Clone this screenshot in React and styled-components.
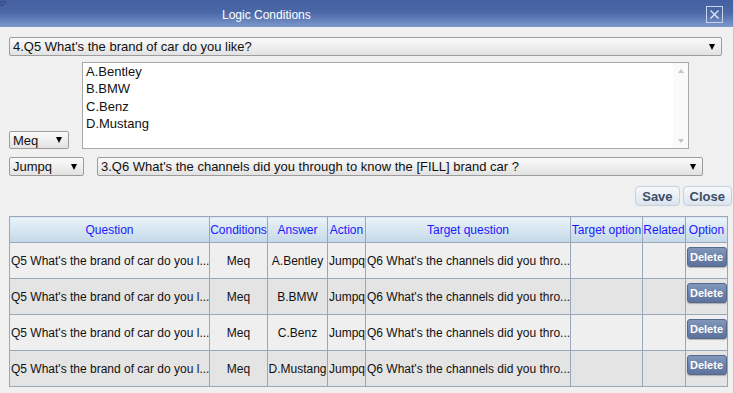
import React from "react";
import styled, { createGlobalStyle } from "styled-components";

const Global = createGlobalStyle`
  html, body { margin: 0; padding: 0; background: #efefef; }
  body { font-family: "Liberation Sans", Arial, sans-serif; }
`;

const Window = styled.div`
  width: 734px;
  height: 393px;
  display: flex;
  flex-direction: column;
  background: #efefef;
  box-sizing: border-box;
  border-right: 1px solid #c8c8c8;
  overflow: hidden;
`;

const TitleBar = styled.div`
  height: 27px;
  flex: none;
  display: flex;
  align-items: center;
  position: relative;
  background: linear-gradient(#4460a0 0%, #4a67a6 45%, #7d98cc 100%);
`;

const Grip = styled.svg`
  position: absolute;
  left: 0;
  top: 0;
`;

const Title = styled.div`
  margin-left: 222px;
  margin-top: 3px;
  color: #ffffff;
  font-size: 12px;
  flex: 1;
`;

const CloseBox = styled.div`
  width: 15px;
  height: 15px;
  margin-right: 10px;
  margin-top: 1px;
  border: 1px solid #c8d2e8;
  display: flex;
  align-items: center;
  justify-content: center;
`;

const Body = styled.div`
  flex: 1;
  padding: 10px 0 0 9px;
  display: flex;
  flex-direction: column;
  background: #f0f0f0;
`;

const Select = styled.div`
  box-sizing: border-box;
  height: ${p => p.$h || 19}px;
  width: ${p => (p.$w ? p.$w + "px" : "auto")};
  flex: ${p => (p.$w ? "none" : 1)};
  border: 1px solid #9c9c9c;
  border-radius: 2px;
  background: linear-gradient(#fbfbfb, #e2e2e2);
  display: flex;
  align-items: center;
  padding: 0 6px 0 3px;
  font-size: 13px;
  color: #111;
  white-space: nowrap;
`;

const SelectText = styled.span`
  flex: 1;
`;

const Arrow = styled.span`
  width: 0;
  height: 0;
  border-left: 3.5px solid transparent;
  border-right: 3.5px solid transparent;
  border-top: 6px solid #000;
`;

const Row = styled.div`
  display: flex;
  align-items: ${p => p.$align || "center"};
  gap: ${p => p.$gap || 0}px;
  margin-top: ${p => p.$mt || 0}px;
  margin-right: ${p => p.$mr || 0}px;
`;

const ListBox = styled.div`
  box-sizing: border-box;
  width: 607px;
  height: 87px;
  margin-left: 13px;
  border: 1px solid #a8a8a8;
  background: #fff;
  display: flex;
`;

const ListItems = styled.div`
  flex: 1;
  padding: 0 0 0 3px;
  font-size: 13px;
  line-height: 17.3px;
  color: #111;
`;

const ScrollBar = styled.div`
  width: 15px;
  display: flex;
  flex-direction: column;
  justify-content: space-between;
  align-items: center;
  padding: 6px 0 5px;
  background: #fafafa;
`;

const ScrollArrow = styled.span`
  width: 0;
  height: 0;
  border-left: 3.5px solid transparent;
  border-right: 3.5px solid transparent;
  ${p => (p.$up ? "border-bottom" : "border-top")}: 4px solid #c4c4c4;
`;

const ButtonBar = styled.div`
  display: flex;
  justify-content: flex-end;
  gap: 3px;
  margin-top: 10px;
  margin-right: 1px;
`;

const Button = styled.button`
  height: 20px;
  padding: 0 6px;
  border: 1px solid #c6d0dc;
  border-radius: 4px;
  background: linear-gradient(#f6f9fc, #dbe4ee);
  color: #3b4d66;
  font-family: inherit;
  font-weight: bold;
  font-size: 13px;
`;

const Table = styled.table`
  margin-top: 10px;
  border-collapse: collapse;
  table-layout: fixed;
  width: 718px;
  font-size: 12px;
`;

const Th = styled.th`
  height: 25px;
  padding: 0;
  font-weight: normal;
  color: #1a1aff;
  border: 1px solid #98a8b8;
  background: linear-gradient(#e9f3f9, #c5d8e8);
  white-space: nowrap;
  overflow: hidden;
`;

const Tr = styled.tr`
  background: ${p => (p.$odd ? "#e4e4e4" : "#efefef")};
`;

const Td = styled.td`
  height: 35px;
  padding: 0 0 0 ${p => (p.$left ? 1 : 0)}px;
  border: 1px solid #98a8b8;
  color: #111;
  text-align: ${p => (p.$left ? "left" : "center")};
  vertical-align: ${p => (p.$top ? "top" : "middle")};
  white-space: nowrap;
  overflow: hidden;
`;

const DeleteButton = styled.button`
  margin-top: 4px;
  width: 40px;
  height: 20px;
  padding: 0;
  border: 1px solid #55698f;
  border-radius: 3px;
  background: linear-gradient(#8196ba, #5d729c);
  color: #fff;
  font-family: inherit;
  font-weight: bold;
  font-size: 11px;
  box-shadow: 0 1px 1px rgba(0, 0, 0, 0.25);
`;

const cols = [200, 58, 60, 38, 205, 72, 43, 42];
const headers = ["Question", "Conditions", "Answer", "Action", "Target question", "Target option", "Related", "Option"];
const answers = ["A.Bentley", "B.BMW", "C.Benz", "D.Mustang"];

export default function App() {
  return (
    <>
      <Global />
      <Window>
        <TitleBar>
          <Grip width="8" height="8" viewBox="0 0 8 8">
            <path d="M0 6 L6 0 M0 3 L3 0 M2 6 L6 2" stroke="#203060" strokeWidth="1" strokeDasharray="1 1" />
          </Grip>
          <Title>Logic Conditions</Title>
          <CloseBox>
            <svg width="11" height="11" viewBox="0 0 11 11">
              <path d="M1.5 1.5 L9.5 9.5 M9.5 1.5 L1.5 9.5" stroke="#e4eaf6" strokeWidth="1.3" />
            </svg>
          </CloseBox>
        </TitleBar>
        <Body>
          <Row $mr={11}>
            <Select $h={19}>
              <SelectText>4.Q5 What's the brand of car do you like?</SelectText>
              <Arrow />
            </Select>
          </Row>
          <Row $align="flex-end" $mt={6}>
            <Select $w={60} $h={18}>
              <SelectText>Meq</SelectText>
              <Arrow />
            </Select>
            <ListBox>
              <ListItems>
                {answers.map(a => (
                  <div key={a}>{a}</div>
                ))}
              </ListItems>
              <ScrollBar>
                <ScrollArrow $up />
                <ScrollArrow />
              </ScrollBar>
            </ListBox>
          </Row>
          <Row $gap={13} $mt={8}>
            <Select $w={75} $h={19}>
              <SelectText>Jumpq</SelectText>
              <Arrow />
            </Select>
            <Select $w={606} $h={19}>
              <SelectText>3.Q6 What's the channels did you through to know the [FILL] brand car ?</SelectText>
              <Arrow />
            </Select>
          </Row>
          <ButtonBar>
            <Button>Save</Button>
            <Button>Close</Button>
          </ButtonBar>
          <Table>
            <colgroup>
              {cols.map((w, i) => (
                <col key={i} style={{ width: w }} />
              ))}
            </colgroup>
            <thead>
              <tr>
                {headers.map(h => (
                  <Th key={h}>{h}</Th>
                ))}
              </tr>
            </thead>
            <tbody>
              {answers.map((a, i) => (
                <Tr key={a} $odd={i % 2 === 1}>
                  <Td $left>Q5 What's the brand of car do you l...</Td>
                  <Td>Meq</Td>
                  <Td>{a}</Td>
                  <Td $left>Jumpq</Td>
                  <Td $left>Q6 What's the channels did you thro...</Td>
                  <Td />
                  <Td />
                  <Td $top>
                    <DeleteButton>Delete</DeleteButton>
                  </Td>
                </Tr>
              ))}
            </tbody>
          </Table>
        </Body>
      </Window>
    </>
  );
}
